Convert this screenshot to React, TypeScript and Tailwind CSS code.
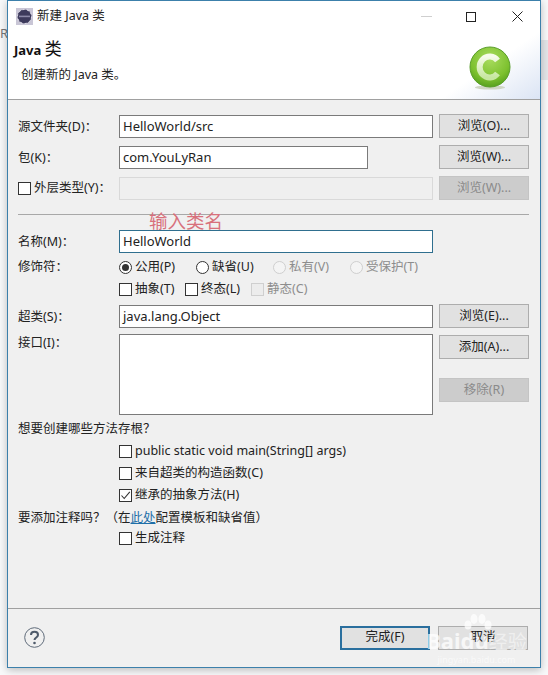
import React from "react";

const font = { fontFamily: '"Noto Sans", "Noto Sans CJK SC", sans-serif' };

function Btn({ children, disabled, primary, cls = "" }: { children: React.ReactNode; disabled?: boolean; primary?: boolean; cls?: string }) {
  return (
    <div
      className={`flex h-[24px] w-[90px] shrink-0 items-center justify-center border text-[12.5px] ${
        primary
          ? "border-2 border-[#2a6f9e] bg-[#e1e1e1] text-[#222]"
          : disabled
            ? "border-[#c4c4c4] bg-[#cccccc] text-[#8a8a8a]"
            : "border-[#adadad] bg-[#e1e1e1] text-[#222]"
      } ${cls}`}
    >
      {children}
    </div>
  );
}

function Check({ checked, disabled }: { checked?: boolean; disabled?: boolean }) {
  return (
    <span className={`flex h-[13px] w-[13px] shrink-0 items-center justify-center border ${disabled ? "border-[#cfcfcf] bg-[#ececec]" : "border-[#333] bg-white"}`}>
      {checked && (
        <svg width="11" height="11" viewBox="0 0 11 11" fill="none">
          <path d="M1.5 5.5 L4.2 8.5 L9.8 1.8" stroke="#333" strokeWidth="1.1" />
        </svg>
      )}
    </span>
  );
}

function CheckLabel({ label, checked, disabled, cls = "" }: { label: string; checked?: boolean; disabled?: boolean; cls?: string }) {
  return (
    <div className={`flex h-[14px] items-center gap-[3px] text-[12.5px] ${disabled ? "text-[#8d8d8d]" : "text-[#222]"} ${cls}`}>
      <Check checked={checked} disabled={disabled} />
      <span>{label}</span>
    </div>
  );
}

function Radio({ label, checked, disabled, cls = "" }: { label: string; checked?: boolean; disabled?: boolean; cls?: string }) {
  return (
    <div className={`flex h-[14px] items-center gap-[3px] text-[12.5px] ${disabled ? "text-[#8d8d8d]" : "text-[#222]"} ${cls}`}>
      <span className={`flex h-[13px] w-[13px] shrink-0 items-center justify-center rounded-full border ${disabled ? "border-[#cfcfcf] bg-[#f4f4f4]" : "border-[#333] bg-white"}`}>
        {checked && <span className="h-[7px] w-[7px] rounded-full bg-[#333]" />}
      </span>
      <span>{label}</span>
    </div>
  );
}

function Input({ value, w = "w-[314px]", focus, disabled }: { value?: string; w?: string; focus?: boolean; disabled?: boolean }) {
  return (
    <div
      className={`flex h-[23px] shrink-0 items-center border px-[3px] text-[13px] text-[#222] ${w} ${
        focus ? "border-[#2f6f8f] bg-white" : disabled ? "border-[#d9d9d9] bg-[#efefef]" : "border-[#7a7a7a] bg-white"
      }`}
    >
      {value}
    </div>
  );
}

function Label({ children }: { children: React.ReactNode }) {
  return <div className="w-[101px] shrink-0 text-[12.5px] leading-[18px] text-[#222]">{children}</div>;
}

export default function App() {
  return (
    <div className="relative h-[675px] w-[548px] overflow-hidden bg-[#f8f9fa]" style={font}>
      <div className="absolute left-0 top-[24px] text-[13px] text-[#777]">R</div>
      <div className="absolute right-0 top-[40px] h-[40px] w-[7px] bg-[#e4e6e9]" />
      <div className="absolute left-[7px] top-0 flex h-[668px] w-[534px] flex-col border border-[#3c80ab] bg-[#f0f0f0] shadow-[0_2px_8px_rgba(0,0,0,0.25)]">
        {/* Header */}
        <div className="relative h-[99px] shrink-0 border-b border-[#a0a0a0] bg-white">
          <div className="absolute bottom-0 right-0 h-[68px] w-[100px] bg-gradient-to-br from-white via-white to-[#dbe4f4]" />
          <div className="relative flex h-[31px] items-center pl-[8px]">
            <svg width="17" height="17" viewBox="0 0 17 17" className="shrink-0">
              <rect width="17" height="17" fill="#c9c6d6" />
              <circle cx="8.5" cy="8.5" r="7" fill="#3d3a5c" />
              <circle cx="8.5" cy="8.5" r="7" fill="none" stroke="#f2f0f8" strokeWidth="1" strokeDasharray="2 2.4" />
              <rect x="3" y="7.6" width="11" height="1.6" fill="#8c89a8" />
            </svg>
            <span className="ml-[4px] text-[12.5px] text-[#222]">新建 Java 类</span>
            <div className="ml-auto flex items-center pr-[17px]">
              <span className="mr-[34px] h-px w-[11px] bg-[#cfcfcf]" />
              <span className="mr-[36px] h-[10px] w-[10px] border border-[#222]" />
              <svg width="11" height="11" viewBox="0 0 11 11">
                <path d="M0.5 0.5 L10.5 10.5 M10.5 0.5 L0.5 10.5" stroke="#222" strokeWidth="1" />
              </svg>
            </div>
          </div>
          <div className="relative ml-[6px] mt-[7px] text-[13px] font-bold leading-[20px] text-[#111]">
            Java <span className="text-[17px] font-normal">类</span>
          </div>
          <div className="relative ml-[13px] mt-[6px] text-[12.5px] leading-[18px] text-[#222]">创建新的 Java 类。</div>
          <svg width="44" height="46" viewBox="0 0 44 46" className="absolute right-[28px] top-[44px]">
            <defs>
              <radialGradient id="g" cx="50%" cy="30%" r="75%">
                <stop offset="0%" stopColor="#a9dc5e" />
                <stop offset="65%" stopColor="#7dc12f" />
                <stop offset="100%" stopColor="#4f9a1a" />
              </radialGradient>
              <linearGradient id="c" x1="0" y1="0" x2="0" y2="1">
                <stop offset="0%" stopColor="#f6fbe9" />
                <stop offset="100%" stopColor="#c7e7a0" />
              </linearGradient>
            </defs>
            <ellipse cx="22" cy="42.5" rx="15" ry="2" fill="#cfd6c4" />
            <circle cx="22" cy="22" r="20" fill="url(#g)" stroke="#5a9e2a" strokeWidth="1" />
            <path d="M29.5 15.5 A10 10.5 0 1 0 29.5 28.5" fill="none" stroke="url(#c)" strokeWidth="6" />
          </svg>
        </div>

        {/* Form */}
        <div className="relative flex flex-1 flex-col px-[10px] pt-[15px]">
          <div className="flex items-center">
            <Label>源文件夹(D)：</Label>
            <Input value="HelloWorld/src" />
            <Btn cls="ml-[6px] -mt-px">浏览(O)...</Btn>
          </div>
          <div className="mt-[8px] flex items-center">
            <Label>包(K)：</Label>
            <Input value="com.YouLyRan" w="w-[249px]" />
            <Btn cls="ml-[71px] -mt-px">浏览(W)...</Btn>
          </div>
          <div className="mt-[8px] flex items-center">
            <div className="flex w-[101px] shrink-0 items-center gap-[3px] text-[12.5px] text-[#222]">
              <Check />
              <span>外层类型(Y)：</span>
            </div>
            <Input disabled />
            <Btn disabled cls="ml-[6px] -mt-px">浏览(W)...</Btn>
          </div>
          <div className="mt-[14px] h-px w-[511px] bg-[#a8a8a8]" />
          <div className="mt-[15px] flex items-center">
            <Label>名称(M)：</Label>
            <Input value="HelloWorld" focus />
          </div>
          <div className="mt-[5px] flex h-[18px] items-center">
            <Label>修饰符：</Label>
            <Radio label="公用(P)" checked cls="w-[77px]" />
            <Radio label="缺省(U)" cls="w-[77px]" />
            <Radio label="私有(V)" disabled cls="w-[77px]" />
            <Radio label="受保护(T)" disabled />
          </div>
          <div className="mt-[4px] flex h-[18px] items-center pl-[101px]">
            <CheckLabel label="抽象(T)" cls="w-[66px]" />
            <CheckLabel label="终态(L)" cls="w-[66px]" />
            <CheckLabel label="静态(C)" disabled />
          </div>
          <div className="mt-[7px] flex items-center">
            <Label>超类(S)：</Label>
            <Input value="java.lang.Object" />
            <Btn cls="ml-[6px] -mt-px">浏览(E)...</Btn>
          </div>
          <div className="mt-[6px] flex items-start">
            <Label>接口(I)：</Label>
            <div className="h-[81px] w-[314px] shrink-0 border border-[#7a7a7a] bg-white" />
            <div className="ml-[6px] mt-px flex flex-col">
              <Btn>添加(A)...</Btn>
              <Btn disabled cls="mt-[19px]">移除(R)</Btn>
            </div>
          </div>
          <div className="mt-[5px] text-[12.5px] leading-[18px] text-[#222]">想要创建哪些方法存根？</div>
          <div className="mt-[6px] flex flex-col gap-[8px] pl-[101px]">
            <CheckLabel label="public static void main(String[] args)" />
            <CheckLabel label="来自超类的构造函数(C)" />
            <CheckLabel label="继承的抽象方法(H)" checked />
          </div>
          <div className="mt-[7px] text-[12.5px] leading-[18px] text-[#222]">
            要添加注释吗？（在<span className="text-[#1f6fa8] underline">此处</span>配置模板和缺省值）
          </div>
          <div className="mt-[4px] pl-[101px]">
            <CheckLabel label="生成注释" />
          </div>
          {/* Annotation */}
          <div className="absolute left-[141px] top-[112px] text-[18.5px] leading-[18px] text-[#d8707c]">输入类名</div>
        </div>

        {/* Footer */}
        <div className="flex h-[59px] shrink-0 items-center border-t border-[#a0a0a0] pb-[1px] pl-[16px]">
          <svg width="21" height="21" viewBox="0 0 21 21" className="shrink-0">
            <circle cx="10.5" cy="10.5" r="9.8" fill="none" stroke="#5f6b7a" strokeWidth="1" />
            <path d="M7 8 C7 3.8 14 3.8 14 8 C14 10.5 10.5 10.5 10.5 13" fill="none" stroke="#4f5b6b" strokeWidth="2" />
            <circle cx="10.5" cy="16" r="1.3" fill="#4f5b6b" />
          </svg>
          <Btn primary cls="ml-[295px]">完成(F)</Btn>
          <Btn cls="ml-[8px]">取消</Btn>
        </div>

        {/* Watermark */}
        <div className="pointer-events-none absolute left-[411px] top-[612px] flex w-[115px] flex-col items-center text-white/75">
          <svg width="30" height="20" viewBox="0 0 30 20" className="fill-white/75">
            <ellipse cx="6" cy="12" rx="3.5" ry="4.5" />
            <ellipse cx="12" cy="6" rx="3.5" ry="5" />
            <ellipse cx="20" cy="6" rx="3.5" ry="5" />
            <ellipse cx="26" cy="12" rx="3.5" ry="4.5" />
          </svg>
          <div className="-mt-[6px] flex items-baseline text-[22px] font-bold leading-[26px]">
            Baidu<span className="text-[19px] font-normal text-[#f4f4f4]/80">经验</span>
          </div>
          <div className="text-[9px] leading-[10px] text-white/60">jingyan.baidu.com</div>
        </div>
      </div>
    </div>
  );
}
